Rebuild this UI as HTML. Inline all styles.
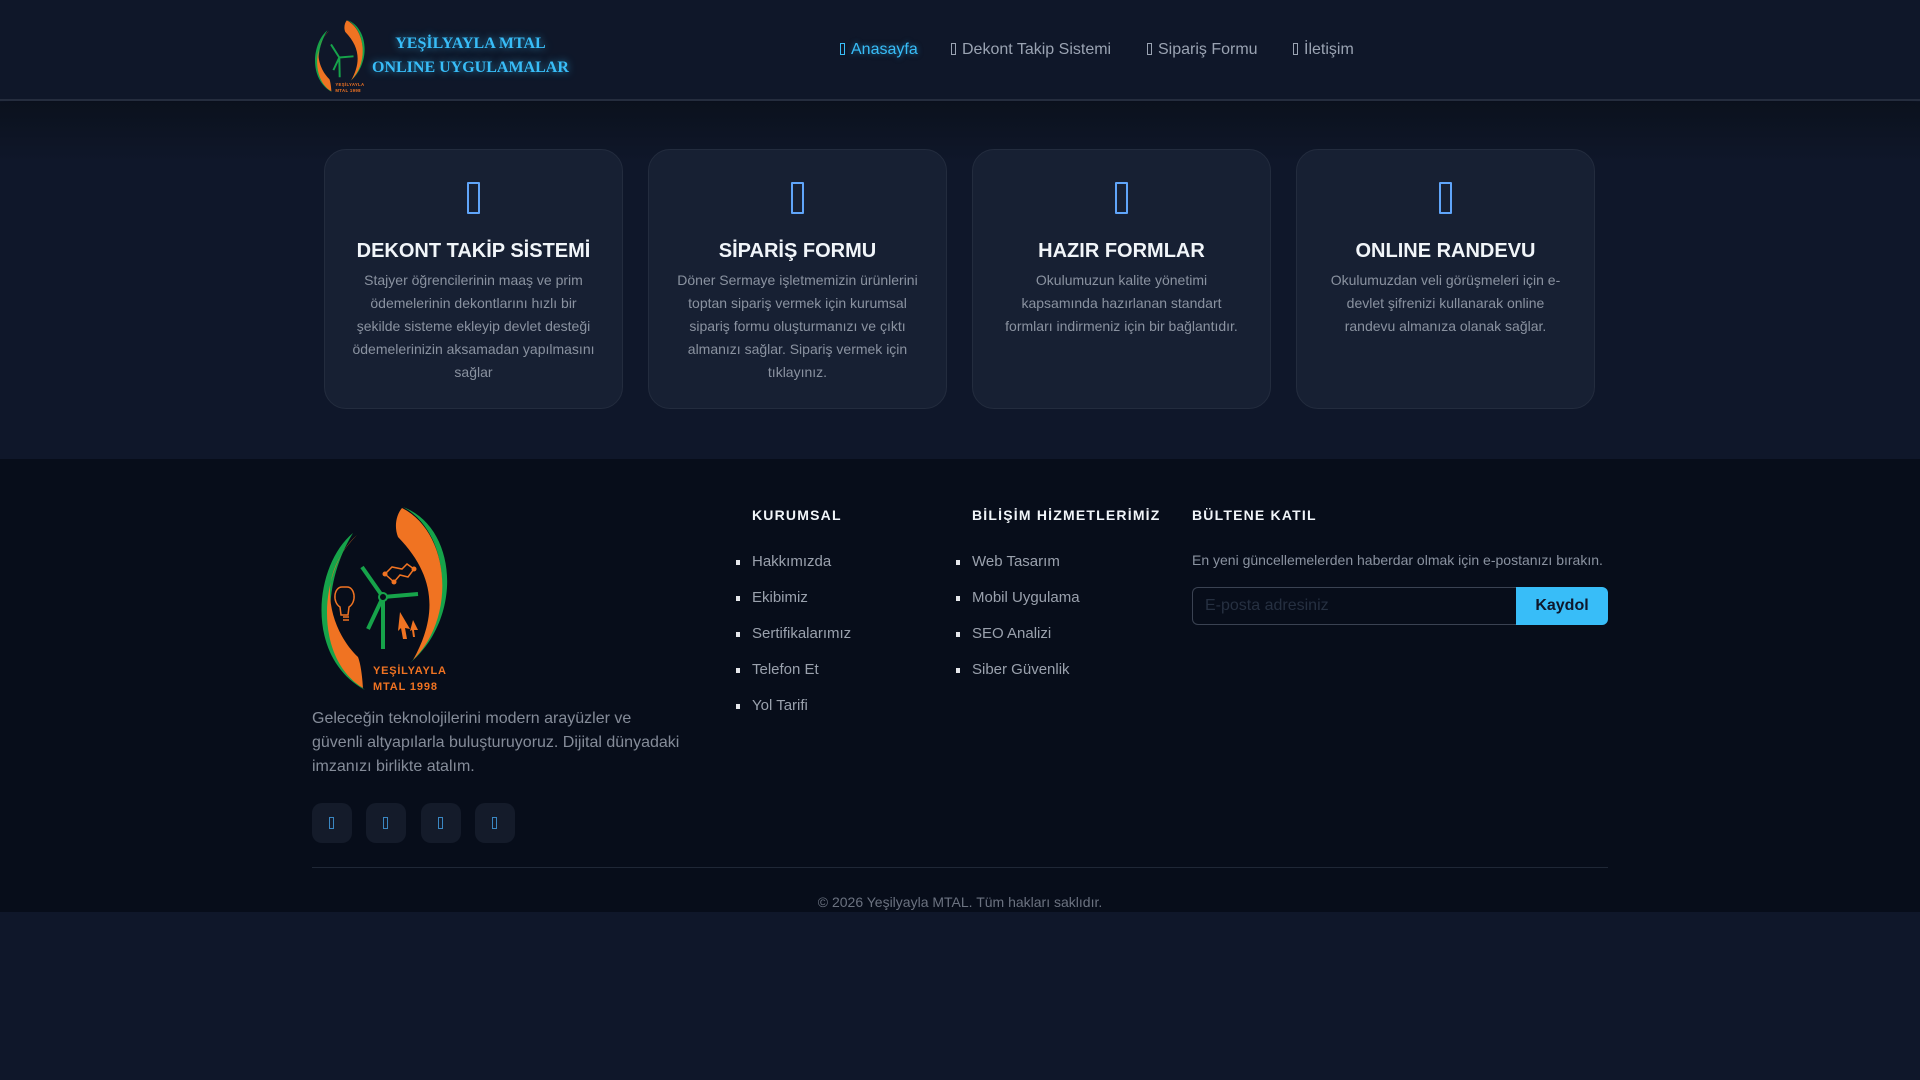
<!DOCTYPE html>
<html><head><meta charset="utf-8">
<style>
*{box-sizing:border-box;margin:0;padding:0}
body{width:1920px;height:1080px;background:#0f172a;font-family:"Liberation Sans",sans-serif;overflow:hidden;position:relative}
.hdr{position:absolute;left:0;top:0;width:1920px;height:101px;background:#0f1729;border-bottom:2px solid #252d3e;box-shadow:0 6px 18px rgba(0,0,0,.45)}
.brand{position:absolute;left:372px;top:32px;color:#38bdf8;font-family:"Liberation Serif",serif;font-weight:bold;font-size:16px;line-height:24px;text-align:center;text-shadow:0 0 8px rgba(56,189,248,.7)}
.nav a{position:absolute;top:41px;font-size:16px;color:#9aa3b2;text-decoration:none;white-space:nowrap}
.nav a.act{color:#38bdf8;text-shadow:0 0 6px rgba(56,189,248,.5)}
.ib{display:inline-block;width:5px;height:12px;border:1px solid currentColor;margin-right:6px;vertical-align:-1px}
.main{position:absolute;top:102px;left:0;width:1920px;height:357px;background:linear-gradient(#0b111d,#0f172a 60px)}
.card{position:absolute;top:149px;width:299px;height:260px;background:#172033;border:1px solid #232c3e;border-radius:22px;text-align:center;padding:0 24px}
.card .ic{width:13px;height:32px;border:2px solid #60a5fa;margin:32px auto 0;border-radius:1px}
.card h3{color:#f1f5f9;font-size:20px;font-weight:bold;margin-top:25px;line-height:24px}
.card p{color:#8a92a0;font-size:14px;line-height:23px;margin-top:6px}
.foot{position:absolute;top:459px;left:0;width:1920px;height:453px;background:#070d1a}
.desc{position:absolute;left:312px;top:707px;width:372px;color:#858c99;font-size:16px;line-height:24px}
.soc{position:absolute;top:803px;width:40px;height:40px;background:#141b2a;border-radius:10px}
.soc i{position:absolute;left:17px;top:14px;width:5px;height:12px;border:1px solid #3a87c2}
.col h4{position:absolute;top:507px;color:#f1f5f9;font-size:14px;font-weight:bold;letter-spacing:1.2px}
.col li{position:absolute;list-style:none;color:#9aa1ad;font-size:15px}
.col li:before{content:"";position:absolute;left:-16px;top:7px;width:4px;height:5px;background:#e5e7eb}
</style></head><body>
<div class="hdr">
<svg style="position:absolute;left:311px;top:20px" width="57" height="73" viewBox="0 0 143 185">
<path d="M41 26 C2 58 -8 150 53 183 C10 150 8 80 41 26Z" fill="#16a34a"/>
<path d="M45 28 C8 60 0 150 51 181 C50 165 48 155 46 150 C30 135 18 110 18 85 C18 65 28 45 45 28Z" fill="#f07322"/>
<path d="M91 0 C145 20 152 110 98 156 C145 110 138 25 91 0Z" fill="#16a34a"/>
<path d="M90 1 C138 25 145 110 101 153 C125 110 125 70 86 30 C82 20 84 8 90 1Z" fill="#f07322"/>
<path d="M71 95 L72 145 M71 95 L50 62 M71 95 L107 92 M71 95 L56 127" stroke="#16a34a" stroke-width="5"/>
<text x="61" y="167" font-size="11" font-weight="bold" fill="#f07322" font-family="Liberation Sans" textLength="73">YEŞİLYAYLA</text>
<text x="61" y="183" font-size="11" font-weight="bold" fill="#f07322" font-family="Liberation Sans" textLength="64">MTAL 1998</text>
</svg>
<div class="brand">YEŞİLYAYLA MTAL<br>ONLINE UYGULAMALAR</div>
<div class="nav">
<a class="act" style="left:840px"><span class="ib"></span>Anasayfa</a>
<a style="left:951px"><span class="ib"></span>Dekont Takip Sistemi</a>
<a style="left:1147px"><span class="ib"></span>Sipariş Formu</a>
<a style="left:1293px"><span class="ib"></span>İletişim</a>
</div>
</div>
<div class="main"></div>
<div class="card" style="left:324px"><div class="ic"></div><h3>DEKONT TAKİP SİSTEMİ</h3><p>Stajyer öğrencilerinin maaş ve prim ödemelerinin dekontlarını hızlı bir şekilde sisteme ekleyip devlet desteği ödemelerinizin aksamadan yapılmasını sağlar</p></div>
<div class="card" style="left:648px"><div class="ic"></div><h3>SİPARİŞ FORMU</h3><p>Döner Sermaye işletmemizin ürünlerini toptan sipariş vermek için kurumsal sipariş formu oluşturmanızı ve çıktı almanızı sağlar. Sipariş vermek için tıklayınız.</p></div>
<div class="card" style="left:972px"><div class="ic"></div><h3>HAZIR FORMLAR</h3><p>Okulumuzun kalite yönetimi kapsamında hazırlanan standart formları indirmeniz için bir bağlantıdır.</p></div>
<div class="card" style="left:1296px"><div class="ic"></div><h3>ONLINE RANDEVU</h3><p>Okulumuzdan veli görüşmeleri için e-devlet şifrenizi kullanarak online randevu almanıza olanak sağlar.</p></div>
<div class="foot"></div>
<svg style="position:absolute;left:312px;top:507px" width="143" height="185" viewBox="0 0 143 185">
<path d="M41 26 C2 58 -8 150 53 183 C10 150 8 80 41 26Z" fill="#16a34a"/>
<path d="M45 28 C8 60 0 150 51 181 C50 165 48 155 46 150 C30 135 18 110 18 85 C18 65 28 45 45 28Z" fill="#f07322"/>
<path d="M91 0 C145 20 152 110 98 156 C145 110 138 25 91 0Z" fill="#16a34a"/>
<path d="M90 1 C138 25 145 110 101 153 C125 110 125 70 86 30 C82 20 84 8 90 1Z" fill="#f07322"/>
<path d="M71 90 L71 142 M71 90 L50 60 M71 90 L106 87 M71 90 L56 122" stroke="#16a34a" stroke-width="4"/>
<circle cx="71" cy="90" r="4" fill="#070d1a" stroke="#16a34a" stroke-width="2"/>
<path d="M30 80 C22 80 20 95 28 100 L29 108 L36 108 L37 100 C45 95 43 80 35 80Z" fill="none" stroke="#f07322" stroke-width="1.5"/>
<path d="M31 110 h6 M31 113 h6" stroke="#f07322" stroke-width="1.5"/>
<path d="M73 67 L80 60 L90 62 L95 57 L102 62 L96 70 L88 68 L82 75Z" fill="none" stroke="#f07322" stroke-width="1.5"/>
<circle cx="73" cy="67" r="2.5" fill="#f07322"/><circle cx="82" cy="75" r="2.5" fill="#f07322"/><circle cx="102" cy="62" r="2.5" fill="#f07322"/>
<path d="M88 105 L98 122 L93 121 L95 132 L91 132 L89 121 L86 124Z M101 113 L106 123 L102 123 L103 130 L101 130 L100 123 L98 124Z" fill="#f07322"/>
<text x="61" y="167" font-size="11" font-weight="bold" fill="#f07322" font-family="Liberation Sans" textLength="73">YEŞİLYAYLA</text>
<text x="61" y="183" font-size="11" font-weight="bold" fill="#f07322" font-family="Liberation Sans" textLength="64">MTAL 1998</text>
</svg>
<div class="desc">Geleceğin teknolojilerini modern arayüzler ve güvenli altyapılarla buluşturuyoruz. Dijital dünyadaki imzanızı birlikte atalım.</div>
<div class="soc" style="left:312px"><i></i></div>
<div class="soc" style="left:366px"><i></i></div>
<div class="soc" style="left:421px"><i></i></div>
<div class="soc" style="left:475px"><i></i></div>
<div class="col">
<h4 style="left:752px">KURUMSAL</h4>
<ul>
<li style="left:752px;top:553px">Hakkımızda</li>
<li style="left:752px;top:589px">Ekibimiz</li>
<li style="left:752px;top:625px">Sertifikalarımız</li>
<li style="left:752px;top:661px">Telefon Et</li>
<li style="left:752px;top:697px">Yol Tarifi</li>
</ul>
<h4 style="left:972px">BİLİŞİM HİZMETLERİMİZ</h4>
<ul>
<li style="left:972px;top:553px">Web Tasarım</li>
<li style="left:972px;top:589px">Mobil Uygulama</li>
<li style="left:972px;top:625px">SEO Analizi</li>
<li style="left:972px;top:661px">Siber Güvenlik</li>
</ul>
<h4 style="left:1192px">BÜLTENE KATIL</h4>
</div>
<div style="position:absolute;left:1192px;top:552px;color:#8a92a0;font-size:14px">En yeni güncellemelerden haberdar olmak için e-postanızı bırakın.</div>
<div style="position:absolute;left:1192px;top:587px;width:324px;height:38px;border:1px solid #3a4252;border-right:none;border-radius:6px 0 0 6px;background:#070d1a;color:#263041;font-size:16px;padding:9px 12px">E-posta adresiniz</div>
<div style="position:absolute;left:1516px;top:587px;width:92px;height:38px;background:#38bdf8;border-radius:0 6px 6px 0;color:#0f172a;font-weight:bold;font-size:16px;text-align:center;line-height:38px">Kaydol</div>
<div style="position:absolute;left:312px;top:867px;width:1296px;height:1px;background:#1f2736"></div>
<div style="position:absolute;left:0;top:894px;width:1920px;text-align:center;color:#6b7280;font-size:14px">© 2026 Yeşilyayla MTAL. Tüm hakları saklıdır.</div>
</body></html>
